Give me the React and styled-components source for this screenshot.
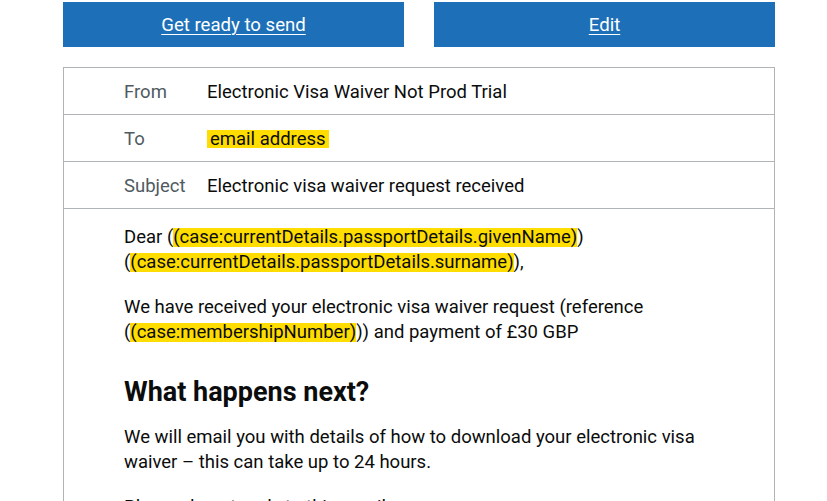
import React from "react";
import styled, { createGlobalStyle } from "styled-components";

const GlobalStyle = createGlobalStyle`
  body {
    margin: 0;
    background: #ffffff;
    font-family: Roboto, "Liberation Sans", Arial, sans-serif;
    color: #0b0c0c;
    overflow: hidden;
  }
`;

const Page = styled.div`
  width: 712px;
  padding: 2px 0 0 63px;
`;

const ButtonRow = styled.div`
  display: grid;
  grid-template-columns: 1fr 1fr;
  gap: 30px;
  margin-bottom: 20px;
`;

const Button = styled.a`
  display: flex;
  align-items: center;
  justify-content: center;
  height: 45px;
  background: #1d70b8;
  color: #ffffff;
  font-size: 18.6px;
  text-decoration: underline;
  text-underline-offset: 3px;
  text-decoration-thickness: 1px;
  cursor: pointer;
`;

const Preview = styled.div`
  border: 1px solid #b1b4b6;
`;

const MetaRow = styled.div`
  display: grid;
  grid-template-columns: 83px 1fr;
  align-items: center;
  box-sizing: border-box;
  height: 47px;
  padding: 2px 0 0 60px;
  border-bottom: 1px solid #b1b4b6;
  font-size: 18.5px;
`;

const Label = styled.span`
  color: #505a5f;
`;

const Value = styled.span`
  color: #0b0c0c;
`;

const Tag = styled.span`
  display: inline-block;
  line-height: 18px;
  background: #ffdd00;
  padding: 0 3px;
`;

const Body = styled.div`
  padding: 16px 60px 0 60px;
  font-size: 18.5px;
  line-height: 25px;
`;

const Para = styled.p`
  margin: 0 0 20px;
`;

const Heading = styled.h2`
  margin: 32px 0 18px;
  font-size: 27px;
  line-height: 30px;
  font-weight: 700;
`;

const Field = styled.span`
  white-space: nowrap;
`;

const Placeholder = styled.span`
  display: inline-block;
  line-height: 19px;
  background: #ffdd00;
`;

export default function App() {
  return (
    <>
      <GlobalStyle />
      <Page>
        <ButtonRow>
          <Button>Get ready to send</Button>
          <Button>Edit</Button>
        </ButtonRow>
        <Preview>
          <MetaRow>
            <Label>From</Label>
            <Value>Electronic Visa Waiver Not Prod Trial</Value>
          </MetaRow>
          <MetaRow>
            <Label>To</Label>
            <Value>
              <Tag>email address</Tag>
            </Value>
          </MetaRow>
          <MetaRow>
            <Label>Subject</Label>
            <Value>Electronic visa waiver request received</Value>
          </MetaRow>
          <Body>
            <Para>
              Dear{" "}
              <Field>
                (<Placeholder>(case:currentDetails.passportDetails.givenName)</Placeholder>)
              </Field>{" "}
              <Field>
                (<Placeholder>(case:currentDetails.passportDetails.surname)</Placeholder>),
              </Field>
            </Para>
            <Para>
              We have received your electronic visa waiver request (reference{" "}
              <Field>
                (<Placeholder>(case:membershipNumber)</Placeholder>))
              </Field>{" "}
              and payment of £30 GBP
            </Para>
            <Heading>What happens next?</Heading>
            <Para>
              We will email you with details of how to download your electronic visa
              waiver – this can take up to 24 hours.
            </Para>
            <Para>Please do not reply to this email.</Para>
          </Body>
        </Preview>
      </Page>
    </>
  );
}
